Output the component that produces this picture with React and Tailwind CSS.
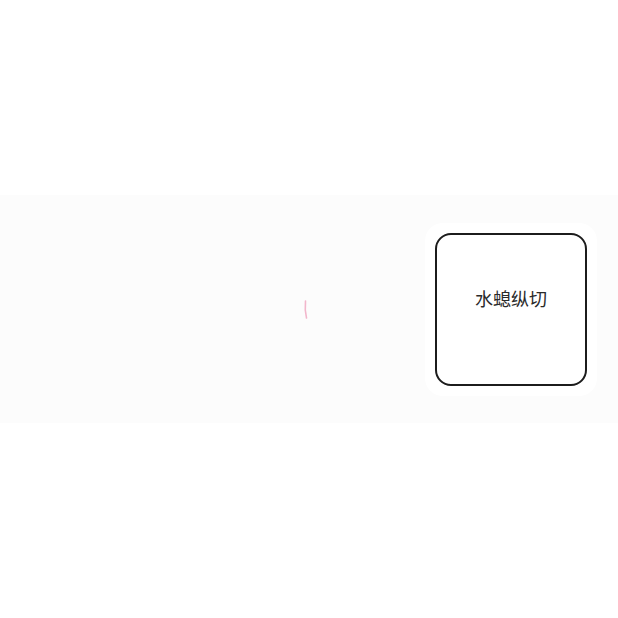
export default function App() {
  return (
    <div className="h-screen w-screen flex items-center bg-white" style={{ fontFamily: '"Noto Sans", "Noto Sans CJK SC", sans-serif' }}>
      <div className="relative h-[228px] w-full bg-[#fcfcfc] flex items-center justify-end pr-[21px]">
        {/* faint pink cursor mark */}
        <svg className="absolute left-[303px] top-[105px]" width="6" height="20" viewBox="0 0 6 20">
          <path d="M2.5 1 C2 6 2 12 3.5 18" stroke="#f2b6cb" strokeWidth="1.6" fill="none" strokeLinecap="round" />
        </svg>
        <div className="w-[172px] h-[173px] bg-white rounded-[18px] p-[10px] flex">
          <div className="flex-1 border-2 border-[#1c1c1c] rounded-[16px] flex justify-center pt-[51px]">
            <span className="text-[18px] leading-[26px] text-[#2a2a2a]">水螅纵切</span>
          </div>
        </div>
      </div>
    </div>
  );
}
